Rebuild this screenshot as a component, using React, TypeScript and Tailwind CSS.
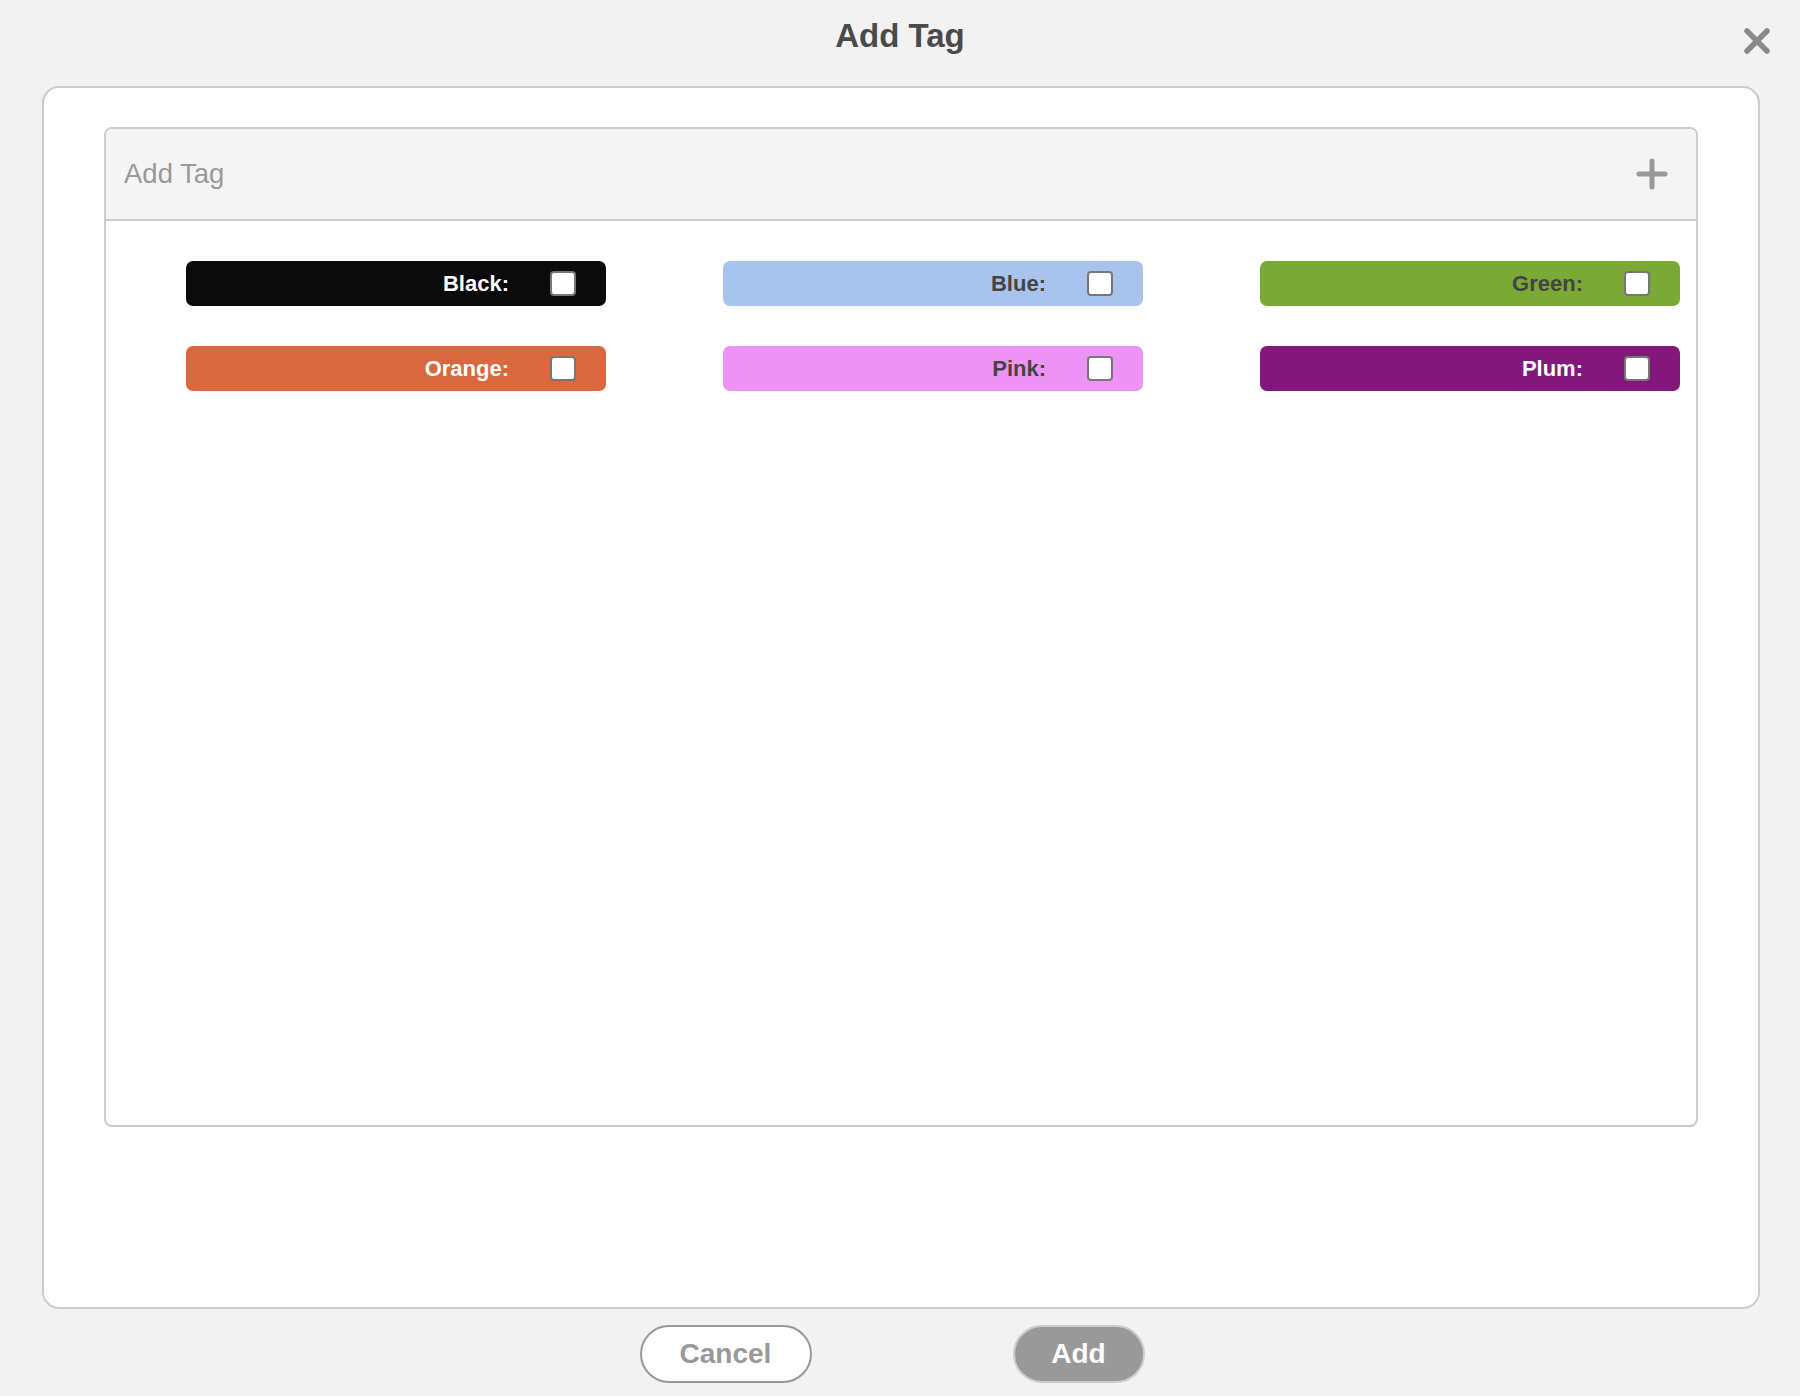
const tags = [
  { name: "Black", bg: "bg-[#0b0b0b]", text: "text-white" },
  { name: "Blue", bg: "bg-[#a8c4ec]", text: "text-[#444]" },
  { name: "Green", bg: "bg-[#7aaa35]", text: "text-[#444]" },
  { name: "Orange", bg: "bg-[#d9683e]", text: "text-white" },
  { name: "Pink", bg: "bg-[#ee93f6]", text: "text-[#444]" },
  { name: "Plum", bg: "bg-[#83187c]", text: "text-white" },
];

function TagRow({ name, bg, text }: { name: string; bg: string; text: string }) {
  return (
    <label
      className={`flex h-[45px] w-[420px] items-center justify-end rounded-[7px] pr-[30px] ${bg}`}
    >
      <span className={`mr-[41px] text-[22px] font-bold ${text}`}>{name}:</span>
      <span className="h-[25px] w-[26px] rounded-[4px] border-2 border-[#777] bg-white" />
    </label>
  );
}

export default function App() {
  return (
    <div
      className="flex h-[1396px] w-[1800px] flex-col bg-[#f2f2f2]"
      style={{ fontFamily: '"Liberation Sans", Arial, sans-serif' }}
    >
      {/* title bar */}
      <div className="relative flex h-[86px] items-start justify-center pt-[14px]">
        <h1 className="text-[33px] leading-[44px] font-bold text-[#4a4a4a]">Add Tag</h1>
        <button className="absolute top-[27px] right-[29px] text-[#8a8a8a]">
          <svg width="28" height="28" viewBox="0 0 28 28">
            <path d="M4 4 L24 24 M24 4 L4 24" stroke="currentColor" strokeWidth="5.5" strokeLinecap="round" />
          </svg>
        </button>
      </div>

      {/* dialog body */}
      <div className="ml-[42px] h-[1223px] w-[1718px] rounded-[17px] border-2 border-[#ccc] bg-white pt-[39px] pl-[60px]">
        <div className="flex h-[1000px] w-[1594px] flex-col overflow-hidden rounded-[8px] border-2 border-[#ccc]">
          <div className="flex h-[92px] flex-none items-center justify-between border-b-2 border-[#ccc] bg-[#f4f4f4] pr-[28px] pl-[18px]">
            <span className="text-[27.5px] font-light text-[#999]">Add Tag</span>
            <svg width="32" height="32" viewBox="0 0 32 32" className="text-[#999]">
              <path d="M16 3 V29 M3 16 H29" stroke="currentColor" strokeWidth="5" strokeLinecap="round" />
            </svg>
          </div>
          <div className="grid grid-cols-[420px_420px_420px] gap-x-[117px] gap-y-[40px] pt-[40px] pl-[80px]">
            {tags.map((t) => (
              <TagRow key={t.name} {...t} />
            ))}
          </div>
        </div>
      </div>

      {/* footer buttons */}
      <div className="flex justify-center gap-[201px] pt-[16px] pr-[16px]">
        <button className="h-[58px] w-[172px] rounded-full border-2 border-[#999] bg-white text-[28px] font-bold text-[#999]">
          Cancel
        </button>
        <button className="h-[58px] w-[132px] rounded-full border-2 border-[#ccc] bg-[#999] text-[28px] font-bold text-white">
          Add
        </button>
      </div>
    </div>
  );
}
